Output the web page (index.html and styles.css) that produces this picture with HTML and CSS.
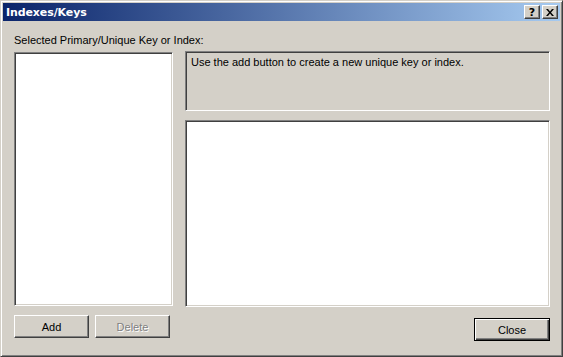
FILE: index.html
```html
<!DOCTYPE html>
<html lang="en">
  <head>
    <meta charset="UTF-8" />
    <title>Indexes/Keys</title>
    <link rel="stylesheet" href="styles.css">
  </head>
  <body>
    <div class="dialog">
      <div class="title-bar">
        <span class="title-text">Indexes/Keys</span>
        <div class="title-buttons">
          <button class="caption-btn">?</button>
          <button class="caption-btn close-x">
            <svg width="8" height="7" viewBox="0 0 8 7">
              <path d="M0 0h2l2 2.5L6 0h2L5 3.5 8 7H6L4 4.5 2 7H0l3-3.5z" fill="#000" />
            </svg>
          </button>
        </div>
      </div>
      <div class="dialog-body">
        <div class="left-col">
          <div class="field-label">Selected Primary/Unique Key or Index:</div>
          <div class="key-list sunken"></div>
          <div class="left-buttons">
            <button class="push-btn">Add</button>
            <button class="push-btn disabled">Delete</button>
          </div>
        </div>
        <div class="right-col">
          <div class="description sunken">
            Use the add button to create a new unique key or index.
          </div>
          <div class="property-grid sunken"></div>
          <div class="right-buttons">
            <button class="push-btn close-btn">Close</button>
          </div>
        </div>
      </div>
    </div>
  </body>
</html>
```

FILE: styles.css
```css
* {
  margin: 0;
  padding: 0;
  box-sizing: border-box;
}

body {
  font-family: "Liberation Sans", Arial, sans-serif;
  font-size: 11px;
  background: #d4d0c8;
  color: #000;
}

.dialog {
  width: 563px;
  height: 357px;
  background: #d4d0c8;
  border: 1px solid;
  border-color: #d4d0c8 #404040 #404040 #d4d0c8;
  box-shadow: inset 1px 1px 0 #fff, inset -1px -1px 0 #808080;
  padding: 2px;
  display: flex;
  flex-direction: column;
}

.title-bar {
  height: 18px;
  background: linear-gradient(to right, #0a246a 0%, #a6caf0 100%);
  display: flex;
  align-items: center;
  justify-content: space-between;
  padding: 0 2px 0 3px;
}

.title-text {
  color: #fff;
  font-weight: bold;
  font-size: 11px;
  font-family: "DejaVu Sans", sans-serif;
  letter-spacing: -0.1px;
}

.title-buttons {
  display: flex;
  gap: 2px;
}

.caption-btn {
  width: 16px;
  height: 14px;
  background: #d4d0c8;
  border: 1px solid;
  border-color: #fff #404040 #404040 #fff;
  box-shadow: inset -1px -1px 0 #808080;
  font-family: "DejaVu Sans", sans-serif;
  font-weight: bold;
  font-size: 11px;
  line-height: 11px;
  display: flex;
  align-items: center;
  justify-content: center;
}

.dialog-body {
  flex: 1;
  display: flex;
  padding: 13px 10px 12px 11px;
  gap: 12px;
}

.left-col {
  width: 159px;
  display: flex;
  flex-direction: column;
}

.field-label {
  height: 18px;
  white-space: nowrap;
}

.sunken {
  border: 1px solid;
  border-color: #808080 #fff #fff #808080;
  box-shadow: inset 1px 1px 0 #404040, inset -1px -1px 0 #d4d0c8;
}

.key-list {
  height: 254px;
  background: #fff;
}

.left-buttons {
  display: flex;
  gap: 6px;
  margin-top: 9px;
}

.push-btn {
  width: 75px;
  height: 23px;
  background: #d4d0c8;
  border: 1px solid;
  border-color: #fff #404040 #404040 #fff;
  box-shadow: inset -1px -1px 0 #808080;
  font-family: "Liberation Sans", Arial, sans-serif;
  font-size: 11px;
  color: #000;
}

.push-btn.disabled {
  color: #808080;
  text-shadow: 1px 1px 0 #fff;
}

.right-col {
  flex: 1;
  display: flex;
  flex-direction: column;
  padding-top: 17px;
}

.description {
  height: 60px;
  padding: 4px 5px;
  background: #d4d0c8;
}

.property-grid {
  height: 187px;
  margin-top: 9px;
  background: #fff;
}

.right-buttons {
  display: flex;
  justify-content: flex-end;
  margin-top: 11px;
}

.close-btn {
  width: 76px;
  border-color: #000;
  box-shadow: inset 1px 1px 0 #fff, inset -1px -1px 0 #404040, inset -2px -2px 0 #808080;
}
```
